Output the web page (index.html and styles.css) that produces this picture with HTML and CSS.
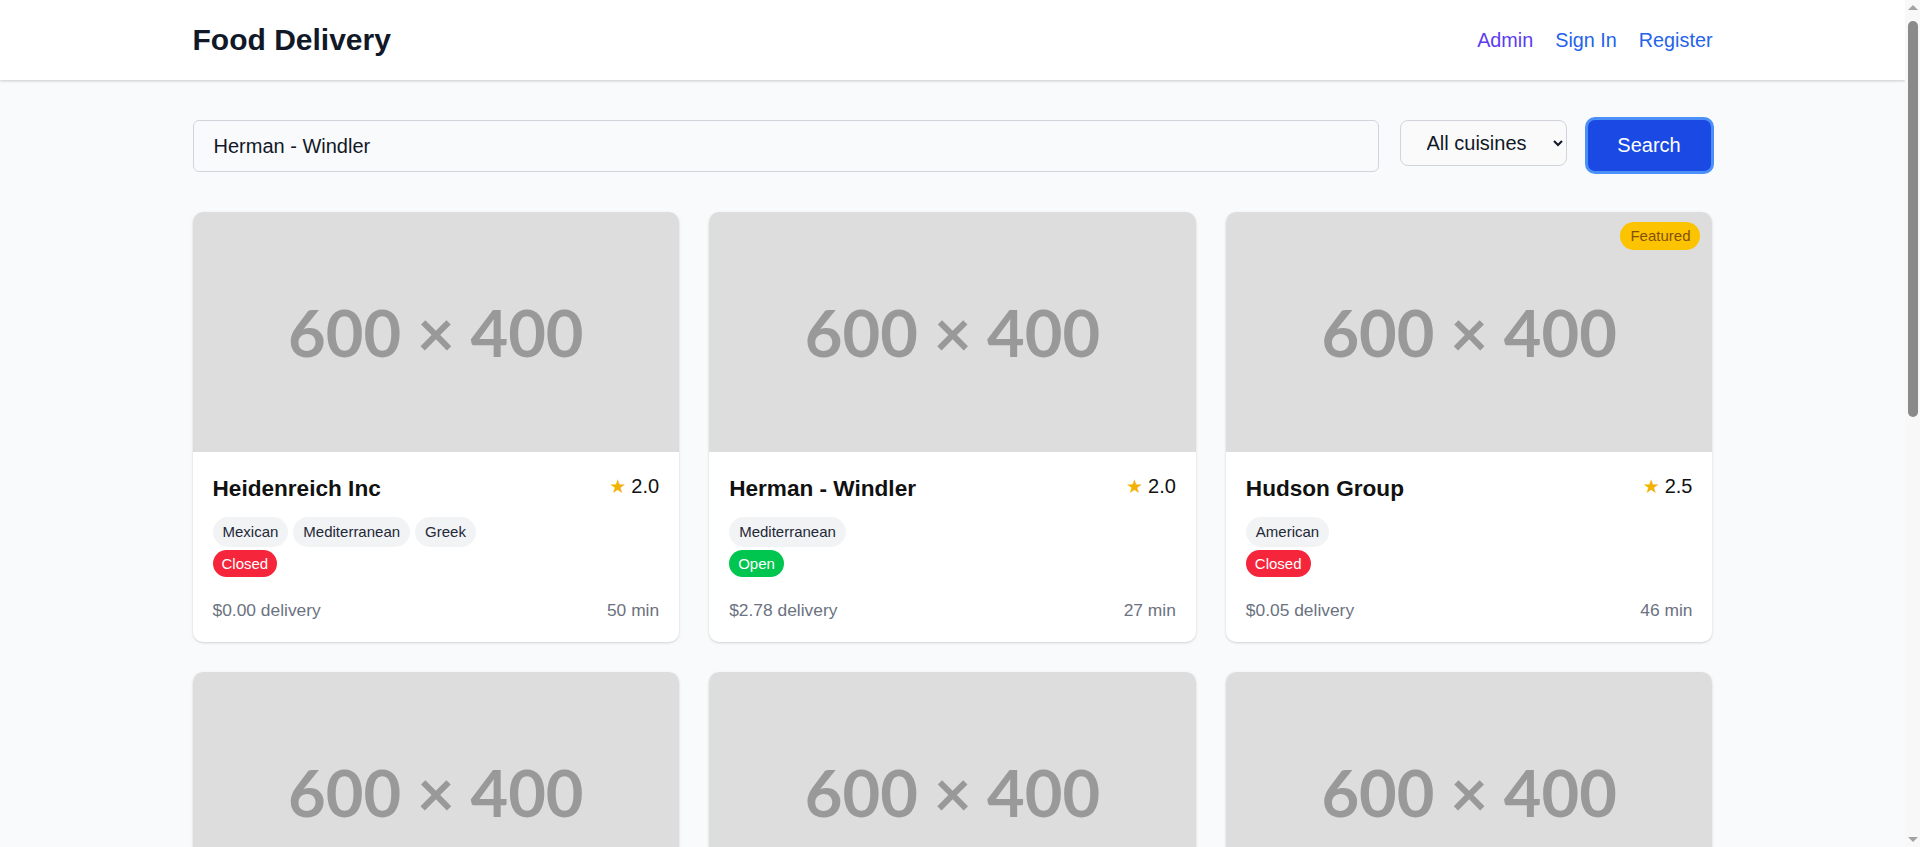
FILE: index.html
```html
<!DOCTYPE html>
<html lang="en">
<head>
<meta charset="utf-8">
<title>Food Delivery</title>
<link rel="stylesheet" href="styles.css">
</head>
<body>
<header class="topbar">
  <div class="container topbar-inner">
    <a class="brand" href="#">Food Delivery</a>
    <nav class="nav">
      <a class="nav-link nav-admin" href="#">Admin</a>
      <a class="nav-link" href="#">Sign In</a>
      <a class="nav-link" href="#">Register</a>
    </nav>
  </div>
</header>

<main class="container main">
  <form class="search-row">
    <input class="search-input" type="text" value="Herman - Windler">
    <select class="cuisine-select">
      <option>All cuisines</option>
    </select>
    <button class="search-btn" type="button">Search</button>
  </form>

  <div class="grid">
    <article class="card">
      <div class="thumb"><span class="thumb-text">600 × 400</span></div>
      <div class="card-body">
        <div class="card-head">
          <h3 class="card-name">Heidenreich Inc</h3>
          <span class="rating"><span class="star">★</span>2.0</span>
        </div>
        <div class="tags"><span class="tag">Mexican</span><span class="tag">Mediterranean</span><span class="tag">Greek</span></div>
        <div class="status-row"><span class="status status-closed">Closed</span></div>
        <div class="card-foot"><span>$0.00 delivery</span><span>50 min</span></div>
      </div>
    </article>

    <article class="card">
      <div class="thumb"><span class="thumb-text">600 × 400</span></div>
      <div class="card-body">
        <div class="card-head">
          <h3 class="card-name">Herman - Windler</h3>
          <span class="rating"><span class="star">★</span>2.0</span>
        </div>
        <div class="tags"><span class="tag">Mediterranean</span></div>
        <div class="status-row"><span class="status status-open">Open</span></div>
        <div class="card-foot"><span>$2.78 delivery</span><span>27 min</span></div>
      </div>
    </article>

    <article class="card">
      <div class="thumb"><span class="thumb-text">600 × 400</span><span class="featured">Featured</span></div>
      <div class="card-body">
        <div class="card-head">
          <h3 class="card-name">Hudson Group</h3>
          <span class="rating"><span class="star">★</span>2.5</span>
        </div>
        <div class="tags"><span class="tag">American</span></div>
        <div class="status-row"><span class="status status-closed">Closed</span></div>
        <div class="card-foot"><span>$0.05 delivery</span><span>46 min</span></div>
      </div>
    </article>

    <article class="card">
      <div class="thumb"><span class="thumb-text">600 × 400</span></div>
      <div class="card-body">
        <div class="card-head">
          <h3 class="card-name">Jacobs LLC</h3>
          <span class="rating"><span class="star">★</span>4.1</span>
        </div>
        <div class="tags"><span class="tag">Italian</span><span class="tag">Pizza</span></div>
        <div class="status-row"><span class="status status-open">Open</span></div>
        <div class="card-foot"><span>$1.99 delivery</span><span>32 min</span></div>
      </div>
    </article>

    <article class="card">
      <div class="thumb"><span class="thumb-text">600 × 400</span></div>
      <div class="card-body">
        <div class="card-head">
          <h3 class="card-name">Kuhn - Torp</h3>
          <span class="rating"><span class="star">★</span>3.4</span>
        </div>
        <div class="tags"><span class="tag">Thai</span></div>
        <div class="status-row"><span class="status status-closed">Closed</span></div>
        <div class="card-foot"><span>$3.10 delivery</span><span>41 min</span></div>
      </div>
    </article>

    <article class="card">
      <div class="thumb"><span class="thumb-text">600 × 400</span></div>
      <div class="card-body">
        <div class="card-head">
          <h3 class="card-name">Lang Group</h3>
          <span class="rating"><span class="star">★</span>3.8</span>
        </div>
        <div class="tags"><span class="tag">Japanese</span><span class="tag">Sushi</span></div>
        <div class="status-row"><span class="status status-open">Open</span></div>
        <div class="card-foot"><span>$0.99 delivery</span><span>25 min</span></div>
      </div>
    </article>

    <article class="card">
      <div class="thumb"><span class="thumb-text">600 × 400</span></div>
      <div class="card-body">
        <div class="card-head">
          <h3 class="card-name">Mante Inc</h3>
          <span class="rating"><span class="star">★</span>4.6</span>
        </div>
        <div class="tags"><span class="tag">Indian</span></div>
        <div class="status-row"><span class="status status-open">Open</span></div>
        <div class="card-foot"><span>$2.05 delivery</span><span>38 min</span></div>
      </div>
    </article>

    <article class="card">
      <div class="thumb"><span class="thumb-text">600 × 400</span></div>
      <div class="card-body">
        <div class="card-head">
          <h3 class="card-name">Nolan and Sons</h3>
          <span class="rating"><span class="star">★</span>2.9</span>
        </div>
        <div class="tags"><span class="tag">Chinese</span></div>
        <div class="status-row"><span class="status status-closed">Closed</span></div>
        <div class="card-foot"><span>$1.25 delivery</span><span>44 min</span></div>
      </div>
    </article>

    <article class="card">
      <div class="thumb"><span class="thumb-text">600 × 400</span></div>
      <div class="card-body">
        <div class="card-head">
          <h3 class="card-name">O'Keefe LLC</h3>
          <span class="rating"><span class="star">★</span>3.2</span>
        </div>
        <div class="tags"><span class="tag">French</span></div>
        <div class="status-row"><span class="status status-open">Open</span></div>
        <div class="card-foot"><span>$4.50 delivery</span><span>52 min</span></div>
      </div>
    </article>

    <article class="card">
      <div class="thumb"><span class="thumb-text">600 × 400</span></div>
      <div class="card-body">
        <div class="card-head">
          <h3 class="card-name">Price Group</h3>
          <span class="rating"><span class="star">★</span>4.0</span>
        </div>
        <div class="tags"><span class="tag">Korean</span></div>
        <div class="status-row"><span class="status status-open">Open</span></div>
        <div class="card-foot"><span>$0.50 delivery</span><span>30 min</span></div>
      </div>
    </article>

    <article class="card">
      <div class="thumb"><span class="thumb-text">600 × 400</span></div>
      <div class="card-body">
        <div class="card-head">
          <h3 class="card-name">Quitzon Inc</h3>
          <span class="rating"><span class="star">★</span>1.8</span>
        </div>
        <div class="tags"><span class="tag">Vietnamese</span></div>
        <div class="status-row"><span class="status status-closed">Closed</span></div>
        <div class="card-foot"><span>$2.20 delivery</span><span>36 min</span></div>
      </div>
    </article>

    <article class="card">
      <div class="thumb"><span class="thumb-text">600 × 400</span></div>
      <div class="card-body">
        <div class="card-head">
          <h3 class="card-name">Runolfsson LLC</h3>
          <span class="rating"><span class="star">★</span>3.6</span>
        </div>
        <div class="tags"><span class="tag">Spanish</span></div>
        <div class="status-row"><span class="status status-open">Open</span></div>
        <div class="card-foot"><span>$1.75 delivery</span><span>29 min</span></div>
      </div>
    </article>

    <article class="card">
      <div class="thumb"><span class="thumb-text">600 × 400</span></div>
      <div class="card-body">
        <div class="card-head">
          <h3 class="card-name">Schmitt Group</h3>
          <span class="rating"><span class="star">★</span>2.7</span>
        </div>
        <div class="tags"><span class="tag">German</span></div>
        <div class="status-row"><span class="status status-closed">Closed</span></div>
        <div class="card-foot"><span>$3.40 delivery</span><span>47 min</span></div>
      </div>
    </article>

    <article class="card">
      <div class="thumb"><span class="thumb-text">600 × 400</span></div>
      <div class="card-body">
        <div class="card-head">
          <h3 class="card-name">Turner Inc</h3>
          <span class="rating"><span class="star">★</span>4.3</span>
        </div>
        <div class="tags"><span class="tag">Turkish</span></div>
        <div class="status-row"><span class="status status-open">Open</span></div>
        <div class="card-foot"><span>$0.00 delivery</span><span>33 min</span></div>
      </div>
    </article>

    <article class="card">
      <div class="thumb"><span class="thumb-text">600 × 400</span></div>
      <div class="card-body">
        <div class="card-head">
          <h3 class="card-name">Upton - Walker</h3>
          <span class="rating"><span class="star">★</span>3.0</span>
        </div>
        <div class="tags"><span class="tag">Greek</span></div>
        <div class="status-row"><span class="status status-closed">Closed</span></div>
        <div class="card-foot"><span>$2.60 delivery</span><span>40 min</span></div>
      </div>
    </article>
  </div>
</main>

<div class="fake-scrollbar" aria-hidden="true">
  <span class="sb-arrow sb-up"></span>
  <span class="sb-thumb"></span>
  <span class="sb-arrow sb-down"></span>
</div>
</body>
</html>
```

FILE: styles.css
```css
* {
  box-sizing: border-box;
}

html, body {
  margin: 0;
  padding: 0;
}

html {
  background: #f9fafb;
}

body {
  margin-right: 15px;
  background: #f9fafb;
  font-family: "Liberation Sans", Arial, sans-serif;
  color: #111827;
}

.container {
  max-width: 1536px;
  margin: 0 auto;
  padding: 0 8px;
}

.topbar {
  background: #ffffff;
  box-shadow: 0 1px 3px rgba(0, 0, 0, 0.14), 0 1px 2px rgba(0, 0, 0, 0.06);
  position: relative;
}

.topbar-inner {
  height: 80px;
  display: flex;
  align-items: center;
  justify-content: space-between;
}

.brand {
  font-size: 30px;
  font-weight: 700;
  color: #111827;
  text-decoration: none;
}

.nav {
  display: flex;
  gap: 22px;
}

.nav-link {
  font-size: 19.8px;
  color: #2563eb;
  text-decoration: none;
}

.nav-admin {
  color: #5b3cf0;
}

.main {
  padding-top: 40px;
  padding-bottom: 360px;
}

.search-row {
  display: flex;
  align-items: flex-start;
  gap: 21px;
  margin: 0 0 40px 0;
}

.search-input {
  flex: 1;
  height: 52px;
  padding: 0 20px;
  font-family: "Liberation Sans", Arial, sans-serif;
  font-size: 20px;
  color: #111827;
  background: #f9fafb;
  border: 1px solid #d1d5db;
  border-radius: 6px;
  outline: none;
}

.cuisine-select {
  width: 167px;
  height: 46px;
  padding: 0 8px 0 22px;
  font-family: "Liberation Sans", Arial, sans-serif;
  font-size: 20px;
  color: #111827;
  background: #fafafa;
  border: 1px solid #d1d5db;
  border-radius: 8px;
}

.search-btn {
  width: 123px;
  height: 51px;
  margin-right: 2px;
  font-family: "Liberation Sans", Arial, sans-serif;
  font-size: 20px;
  color: #ffffff;
  background: #1a49e4;
  border: none;
  border-radius: 7px;
  box-shadow: 0 0 0 3px #4b8ff8;
  cursor: pointer;
}

.grid {
  display: grid;
  grid-template-columns: repeat(3, 1fr);
  gap: 30px;
}

.card {
  background: #ffffff;
  border-radius: 10px;
  overflow: hidden;
  box-shadow: 0 1px 3px rgba(0, 0, 0, 0.12), 0 1px 2px rgba(0, 0, 0, 0.05);
  display: flex;
  flex-direction: column;
}

.thumb {
  position: relative;
  height: 240px;
  background: #dddddd;
  display: flex;
  align-items: center;
  justify-content: center;
}

.thumb-text {
  font-family: Lato, "Open Sans", sans-serif;
  font-weight: 700;
  font-size: 65px;
  color: #999999;
  line-height: 1;
}

.featured {
  position: absolute;
  top: 10px;
  right: 12px;
  background: #fcc400;
  color: #85510a;
  font-size: 15px;
  line-height: 20px;
  padding: 4px 10px;
  border-radius: 999px;
}

.card-body {
  flex: 1;
  padding: 21px 20px 19px;
  display: flex;
  flex-direction: column;
}

.card-head {
  display: flex;
  justify-content: space-between;
  align-items: flex-start;
}

.card-name {
  margin: 0;
  font-size: 22.6px;
  line-height: 31px;
  font-weight: 700;
  color: #111111;
}

.rating {
  display: flex;
  align-items: center;
  gap: 5px;
  font-size: 20px;
  line-height: 26px;
  color: #111111;
}

.star {
  font-family: "DejaVu Sans", sans-serif;
  font-size: 19px;
  color: #f2b200;
}

.tags {
  display: flex;
  flex-wrap: wrap;
  gap: 5px;
  margin-top: 13px;
}

.tag {
  background: #f1f3f5;
  color: #1f2937;
  font-size: 15px;
  line-height: 22px;
  padding: 4px 10px;
  border-radius: 999px;
}

.status-row {
  display: flex;
  margin-top: 3px;
}

.status {
  color: #ffffff;
  font-size: 15px;
  line-height: 21px;
  padding: 3px 9px;
  border-radius: 999px;
}

.status-closed {
  background: #f5263c;
}

.status-open {
  background: #00c64f;
}

.card-foot {
  margin-top: auto;
  padding-top: 21px;
  display: flex;
  justify-content: space-between;
  font-size: 17.4px;
  line-height: 25px;
  color: #6b7280;
}

.fake-scrollbar {
  position: fixed;
  top: 0;
  right: 0;
  bottom: 0;
  width: 15px;
  background: #f8f8f8;
  display: flex;
  flex-direction: column;
  align-items: center;
}

.sb-arrow {
  width: 0;
  height: 0;
  border-left: 5px solid transparent;
  border-right: 5px solid transparent;
}

.sb-up {
  margin-top: 5px;
  border-bottom: 5px solid #a3a3a3;
}

.sb-thumb {
  margin-top: 11px;
  width: 10px;
  height: 396px;
  border-radius: 5px;
  background: #8a8a8a;
}

.sb-down {
  margin-top: auto;
  margin-bottom: 5px;
  border-top: 5px solid #a3a3a3;
}
```
